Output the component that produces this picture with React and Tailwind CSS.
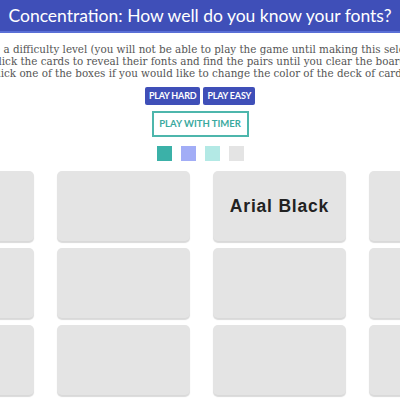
import { useState } from "react";

const lines = [
    "Choose a difficulty level (you will not be able to play the game until making this selection).",
    "Click the cards to reveal their fonts and find the pairs until you clear the board.",
    "Click one of the boxes if you would like to change the color of the deck of cards.",
];

const swatches = ["bg-[#3bb1a8]", "bg-[#a2adf6]", "bg-[#b3e9e5]", "bg-[#e4e4e4]"];

const cards = ["", "", "Arial Black", "", "", "", "", "", "", "", "", ""];

function Card({ label }) {
    return (
        <div className="w-[133px] h-[70px] shrink-0 rounded-[5px] bg-[#e4e4e4] shadow-[0_2px_1px_rgba(0,0,0,0.15)] flex items-center justify-center">
            {label && (
                <span className="font-['Liberation_Sans',Arial,sans-serif] font-black text-[17.5px] tracking-[0.8px] text-[#222]">
                    {label}
                </span>
            )}
        </div>
    );
}

export default function App() {
    const [deck] = useState(cards);

    return (
        <div className="w-[400px] h-[400px] overflow-hidden bg-white">
            <header className="h-[33px] bg-[#3f4fb8] border-b-2 border-[#5a6fd6] flex items-center justify-center">
                <h1 className="font-['Lato',sans-serif] text-white text-[17.5px] whitespace-nowrap leading-none">
                    Concentration: How well do you know your fonts?
                </h1>
            </header>

            <section className="mt-[10px] flex flex-col items-center">
                {lines.map((l) => (
                    <p key={l} className="whitespace-nowrap font-['DejaVu_Serif',serif] text-[10.35px] leading-[12px] text-[#555]">
                        {l}
                    </p>
                ))}
            </section>

            <div className="mt-[8px] flex justify-center gap-[3px] font-['Lato',sans-serif] font-bold">
                <button className="h-[18px] px-[4px] rounded-[2px] bg-[#3f4fb8] text-white text-[9px] tracking-[-0.2px] whitespace-nowrap">PLAY HARD</button>
                <button className="h-[18px] px-[4px] rounded-[2px] bg-[#3f4fb8] text-white text-[9px] tracking-[-0.2px] whitespace-nowrap">PLAY EASY</button>
            </div>

            <div className="mt-[6px] flex justify-center">
                <button className="h-[26px] w-[97px] border-2 border-[#4db6ac] text-[#3aa99e] font-['Lato',sans-serif] font-bold text-[9.5px] whitespace-nowrap">
                    PLAY WITH TIMER
                </button>
            </div>

            <div className="mt-[9px] flex justify-center gap-[9px]">
                {swatches.map((s) => (
                    <div key={s} className={`w-[15px] h-[15px] ${s}`} />
                ))}
            </div>

            <div className="mt-[10px] flex justify-center ml-[3px]">
                <div className="grid grid-cols-[repeat(4,133px)] gap-x-[23px] gap-y-[7px] shrink-0">
                    {deck.map((c, i) => (
                        <Card key={i} label={c} />
                    ))}
                </div>
            </div>
        </div>
    );
}
